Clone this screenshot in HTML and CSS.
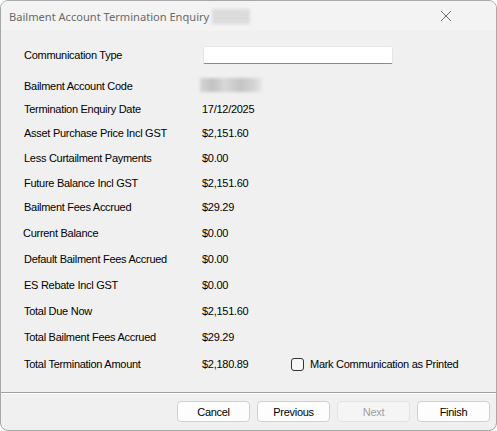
FILE: index.html
```html
<!DOCTYPE html>
<html>
<head>
<meta charset="utf-8">
<link rel="stylesheet" href="styles.css">
</head>
<body>
<div class="window">
  <div class="titlebar">
    <span class="title">Bailment Account Termination Enquiry</span>
    <span class="title-blur"></span>
    <svg class="close" width="12" height="12" viewBox="0 0 12 12"><path d="M1 1 L11 11 M11 1 L1 11" stroke="#6e6e6e" stroke-width="1" fill="none"/></svg>
  </div>
  <div class="client">
    <div class="form">
      <div class="lbl r1">Communication Type</div>
      <div class="combo"></div>

      <div class="lbl">Bailment Account Code</div>
      <div class="val"><span class="code-blur"></span></div>

      <div class="lbl">Termination Enquiry Date</div>
      <div class="val">17/12/2025</div>

      <div class="lbl">Asset Purchase Price Incl GST</div>
      <div class="val">$2,151.60</div>

      <div class="lbl">Less Curtailment Payments</div>
      <div class="val">$0.00</div>

      <div class="lbl">Future Balance Incl GST</div>
      <div class="val">$2,151.60</div>

      <div class="lbl">Bailment Fees Accrued</div>
      <div class="val">$29.29</div>

      <div class="lbl shift">Current Balance</div>
      <div class="val">$0.00</div>

      <div class="lbl">Default Bailment Fees Accrued</div>
      <div class="val">$0.00</div>

      <div class="lbl">ES Rebate Incl GST</div>
      <div class="val">$0.00</div>

      <div class="lbl">Total Due Now</div>
      <div class="val">$2,151.60</div>

      <div class="lbl">Total Bailment Fees Accrued</div>
      <div class="val">$29.29</div>

      <div class="lbl">Total Termination Amount</div>
      <div class="val">$2,180.89</div>
      <label class="check"><span class="box"></span>Mark Communication as Printed</label>
    </div>
  </div>
  <div class="footer">
    <button class="btn">Cancel</button>
    <button class="btn">Previous</button>
    <button class="btn disabled">Next</button>
    <button class="btn">Finish</button>
  </div>
</div>
</body>
</html>
```

FILE: styles.css
```css
html, body {
  margin: 0;
  padding: 0;
  background: #ffffff;
}

.window {
  width: 497px;
  height: 431px;
  box-sizing: border-box;
  border: 1px solid #a8a8a8;
  border-radius: 8px;
  overflow: hidden;
  background: #f0f0f0;
  display: flex;
  flex-direction: column;
  font-family: "Liberation Sans", Arial, sans-serif;
  font-size: 11px;
  letter-spacing: -0.28px;
  color: #000;
}

.titlebar {
  height: 30px;
  flex: none;
  background: #f3f3f3;
  display: flex;
  align-items: center;
  padding-left: 8px;
  padding-right: 44px;
}

.title {
  font-family: "Noto Sans", "Open Sans", sans-serif;
  font-size: 11.1px;
  letter-spacing: 0;
  color: #6a6a6a;
  white-space: nowrap;
}

.title-blur {
  width: 38px;
  height: 15px;
  margin-left: 3px;
  background: #dcdcdc;
  filter: blur(1.5px);
}

.close {
  margin-left: auto;
  margin-right: 0;
}

.client {
  flex: 1;
  padding: 17px 0 0 23px;
  border-bottom: 1px solid #a0a0a0;
  box-shadow: 0 1px 0 #ffffff;
}

.form {
  display: grid;
  grid-template-columns: 178px 89px auto;
  grid-template-rows: 31px 23px 24px 25px 25px 24px 26px 26px 26px 26px 26px 27px 14px;
  align-items: start;
  line-height: 14px;
}

.lbl {
  grid-column: 1;
  white-space: nowrap;
}

.lbl.shift {
  margin-left: -1px;
}

.val {
  grid-column: 2;
  white-space: nowrap;
}

.combo {
  grid-column: 2 / span 2;
  width: 190px;
  height: 18px;
  margin-top: -2px;
  margin-left: 1px;
  box-sizing: border-box;
  background: #ffffff;
  border: 1px solid #e6e6e6;
  border-bottom: 1px solid #8a8a8a;
  border-radius: 2px;
}

.code-blur {
  display: block;
  width: 62px;
  height: 14px;
  margin-top: -1px;
  margin-left: -2px;
  background: linear-gradient(90deg, #d4d4d4 0%, #c2c2c2 20%, #d8d8d8 40%, #c4c4c4 65%, #d2d2d2 85%, #e6e6e6 100%);
  filter: blur(1.5px);
}

.check {
  grid-column: 3;
  display: flex;
  align-items: center;
  white-space: nowrap;
  margin-left: 0;
}

.box {
  width: 11px;
  height: 11px;
  border: 1px solid #333;
  border-radius: 3px;
  background: #f7f7f7;
  margin-right: 6px;
}

.footer {
  height: 36px;
  flex: none;
  display: flex;
  justify-content: flex-end;
  gap: 7px;
  padding: 7px 6px 0 0;
  box-sizing: border-box;
  margin-top: 1px;
}

.btn {
  width: 73px;
  height: 21px;
  box-sizing: border-box;
  border: 1px solid #d0d0d0;
  border-radius: 4px;
  background: #fdfdfd;
  font-family: "Liberation Sans", Arial, sans-serif;
  font-size: 11px;
  letter-spacing: -0.28px;
  color: #000;
  padding: 0;
}

.btn.disabled {
  color: #a0a0a0;
  border-color: #e2e2e2;
  background: #f5f5f5;
}
```
